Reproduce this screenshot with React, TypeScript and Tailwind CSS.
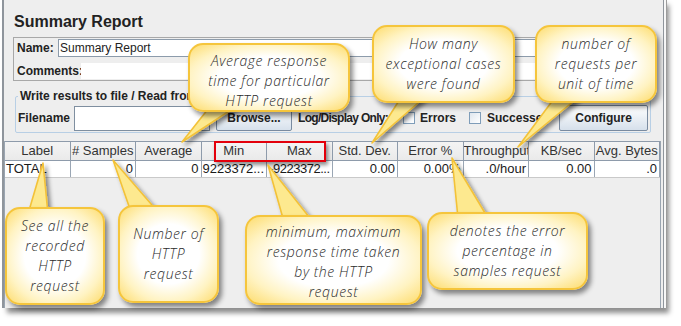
import React from "react";

const cols: { h: string; v: string; left?: boolean; tight?: boolean }[] = [
  { h: "Label", v: "TOTAL", left: true },
  { h: "# Samples", v: "0" },
  { h: "Average", v: "0" },
  { h: "Min", v: "9223372..." },
  { h: "Max", v: "-9223372...", tight: true },
  { h: "Std. Dev.", v: "0.00" },
  { h: "Error %", v: "0.00%" },
  { h: "Throughput", v: ".0/hour" },
  { h: "KB/sec", v: "0.00" },
  { h: "Avg. Bytes", v: ".0" },
];

const bubble =
  "absolute flex flex-col items-center justify-center rounded-[15px] border-2 border-[#f5c53c] bg-[radial-gradient(ellipse_at_center,#ffffff_0%,#ffffff_45%,#fff3c2_72%,#fddc6e_100%)] shadow-[3px_4px_5px_rgba(0,0,0,0.45)] font-['Open_Sans','DejaVu_Sans',sans-serif] italic font-light text-[14px] leading-[20px] tracking-[0.6px] text-[#2b2b2b] text-center whitespace-nowrap";

export default function App() {
  return (
    <div className="relative w-[681px] h-[326px] bg-white overflow-hidden font-['Liberation_Sans',Arial,sans-serif] text-[#222]">
      {/* window panel */}
      <div className="ml-[2px] w-[662px] h-[308px] bg-[#eeeeee] border-l-2 border-r border-[#8f959c] flex flex-col shadow-[2px_0_0_#f7f7f7,3px_0_0_#9c9c9c,5px_5px_5px_rgba(0,0,0,0.45)]">
        <div className="ml-[10px] mt-[12px] h-[20px] leading-[20px] text-[16px] font-bold text-[#222]">
          Summary Report
        </div>

        {/* name / comments */}
        <div className="ml-[9px] mt-[5px] w-[642px] border border-[#a8a8a8] p-[1px] flex flex-col">
          <div className="flex items-center h-[18px]">
            <span className="w-[43px] pl-[2px] text-[12px] font-bold">Name:</span>
            <div className="flex-1 h-[18px] bg-white border border-[#8c9bab] text-[12px] leading-[16px] pl-[1px]">
              Summary Report
            </div>
          </div>
          <div className="flex items-center h-[16px] mt-[6px]">
            <span className="w-[66px] pl-[2px] text-[12px] font-bold">Comments:</span>
            <div className="flex-1 h-[16px] bg-white" />
          </div>
        </div>

        {/* write results group */}
        <fieldset className="ml-[11px] mt-[8px] w-[635px] border border-[#b8cfe5] rounded-[2px] px-[2px] pt-[2px] pb-[1px]">
          <legend className="px-[2px] text-[12px] font-bold leading-[14px]">
            Write results to file / Read from file
          </legend>
          <div className="flex items-center h-[26px]">
            <span className="w-[56px] text-[12px] font-bold">Filename</span>
            <div className="w-[136px] h-[25px] bg-white border border-[#7f8fa0]" />
            <button className="ml-[6px] w-[76px] h-[25px] border border-[#7a8ba0] rounded-[2px] bg-[linear-gradient(#ffffff,#d7e1ec)] text-[12px] font-bold">
              Browse...
            </button>
            <span className="ml-[6px] w-[105px] text-[12px] font-bold whitespace-nowrap tracking-[-0.7px]">
              Log/Display Only:
            </span>
            <span className="w-[12px] h-[12px] border border-[#7f9db9] bg-[linear-gradient(135deg,#dfe6ee,#ffffff)]" />
            <span className="ml-[5px] text-[12px] font-bold">Errors</span>
            <span className="ml-[13px] w-[12px] h-[12px] border border-[#7f9db9] bg-[linear-gradient(135deg,#dfe6ee,#ffffff)]" />
            <span className="ml-[6px] text-[12px] font-bold">Successes</span>
            <button className="ml-[10px] w-[89px] h-[26px] border border-[#7a8ba0] rounded-[2px] bg-[linear-gradient(#ffffff,#d6e0eb)] text-[12px] font-bold text-[#222]">
              Configure
            </button>
          </div>
        </fieldset>

        {/* table */}
        <div className="mt-[8px] w-[657px] flex-1 flex flex-col border-l border-r border-[#9aa5b1]">
          <div className="grid grid-cols-10 h-[20px] border-t border-b border-[#8e9bab] bg-[linear-gradient(#f4f4f4,#eaeaea)]">
            {cols.map((c) => (
              <div
                key={c.h}
                className="border-r border-[#8e9bab] text-center text-[13px] leading-[18px] text-[#333] whitespace-nowrap overflow-hidden"
              >
                {c.h}
              </div>
            ))}
          </div>
          <div className="grid grid-cols-10 h-[17px] bg-white border-b border-[#c9c9c9]">
            {cols.map((c) => (
              <div
                key={c.h}
                className={
                  "border-r border-[#9aa6b4] text-[13px] leading-[16px] text-[#1a1a1a] whitespace-nowrap overflow-hidden " +
                  (c.left ? "text-left pl-[1px]" : "text-right pr-[2px]") +
                  (c.tight ? " tracking-[-0.5px]" : "")
                }
              >
                {c.v}
              </div>
            ))}
          </div>
          <div className="flex-1" />
        </div>
      </div>

      {/* red highlight around Min / Max */}
      <div className="absolute left-[214px] top-[141px] w-[112px] h-[21px] border-2 border-[#e3000b] shadow-[2px_3px_4px_rgba(0,0,0,0.45)]" />

      {/* callout tails */}
      <svg className="absolute left-0 top-0 w-[681px] h-[326px] pointer-events-none" viewBox="0 0 681 326">
        <defs>
          <filter id="ds" x="-50%" y="-50%" width="200%" height="200%">
            <feDropShadow dx="3" dy="3" stdDeviation="2" floodColor="#000" floodOpacity="0.45" />
          </filter>
        </defs>
        <g fill="#fde98f" stroke="#f3c239" strokeWidth="1.6" strokeLinejoin="round" filter="url(#ds)">
          <polygon points="212,104 240,104 182,142" />
          <polygon points="402,96 426,96 372,143" />
          <polygon points="556,96 580,96 518,147" />
          <polygon points="28,214 48,214 43,163" />
          <polygon points="131,212 158,212 113,160" />
          <polygon points="284,222 313,222 268,165" />
          <polygon points="458,218 488,218 452,158" />
        </g>
      </svg>

      {/* callout boxes */}
      <div className={bubble + " left-[188px] top-[43px] w-[162px] h-[69px] pt-[6px]"}>
        <div>Average response</div>
        <div>time for particular</div>
        <div>HTTP request</div>
      </div>
      <div className={bubble + " left-[372px] top-[25px] w-[143px] h-[78px]"}>
        <div>How many</div>
        <div>exceptional cases</div>
        <div>were found</div>
      </div>
      <div className={bubble + " left-[535px] top-[25px] w-[122px] h-[78px]"}>
        <div>number of</div>
        <div>requests per</div>
        <div>unit of time</div>
      </div>
      <div className={bubble + " left-[5px] top-[207px] w-[100px] h-[98px]"}>
        <div>See all the</div>
        <div>recorded</div>
        <div>HTTP</div>
        <div>request</div>
      </div>
      <div className={bubble + " left-[118px] top-[205px] w-[101px] h-[98px]"}>
        <div>Number of</div>
        <div>HTTP</div>
        <div>request</div>
      </div>
      <div className={bubble + " left-[245px] top-[215px] w-[177px] h-[90px] pt-[3px]"}>
        <div>minimum, maximum</div>
        <div>response time taken</div>
        <div>by the HTTP</div>
        <div>request</div>
      </div>
      <div className={bubble + " left-[427px] top-[212px] w-[161px] h-[78px]"}>
        <div>denotes the error</div>
        <div>percentage in</div>
        <div>samples request</div>
      </div>
    </div>
  );
}
